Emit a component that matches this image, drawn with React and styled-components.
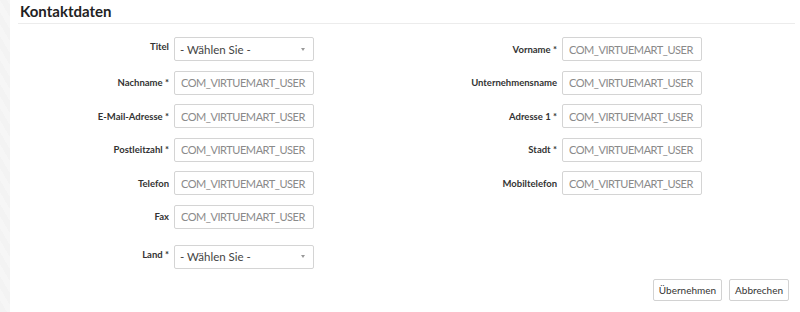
import React from 'react';
import styled, { createGlobalStyle } from 'styled-components';

const GlobalStyle = createGlobalStyle`
    html, body {
        margin: 0;
        padding: 0;
        background: #f4f4f4;
        font-family: Lato, "Liberation Sans", sans-serif;
        color: #333;
    }
`

const Page = styled.div`
    display: flex;
    width: 800px;
    height: 312px;
    overflow: hidden;
`

const SideStrip = styled.div`
    width: 10px;
    flex-shrink: 0;
    background: repeating-linear-gradient(60deg, #f3f3f3 0 6px, #f6f6f6 6px 12px);
`

const Panel = styled.div`
    flex: 1;
    background: #fff;
    display: flex;
    flex-direction: column;
`

const Header = styled.div`
    margin: 0 5px 0 8px;
    height: 24px;
    border-bottom: 1px solid #ececec;
    padding-left: 2px;
    box-sizing: border-box;
`

const Title = styled.h2`
    margin: 0;
    font-size: 15px;
    font-weight: 700;
    line-height: 23px;
    color: #222;
`

const Columns = styled.div`
    display: grid;
    grid-template-columns: 300px 300px;
    column-gap: 88px;
    padding: 13px 0 0 4px;
    align-items: start;
`

const Column = styled.div`
    display: flex;
    flex-direction: column;
    gap: 9.5px;
`

const Field = styled.div`
    display: grid;
    grid-template-columns: 155px 140px;
    column-gap: 5px;
    align-items: ${({ top }) => (top ? 'start' : 'center')};
    margin-top: ${({ extra }) => extra || 0}px;
`

const Label = styled.label`
    text-align: right;
    font-size: 9.5px;
    font-weight: 700;
    color: #333;
    white-space: nowrap;
    padding-top: ${({ top }) => (top ? '4px' : '0')};
`

const Input = styled.input`
    box-sizing: border-box;
    width: 140px;
    height: 24px;
    border: 1px solid #d4d4d4;
    border-radius: 2px;
    padding: 0 6px;
    font-family: Lato, "Liberation Sans", sans-serif;
    font-size: 11px;
    letter-spacing: -0.45px;
    color: #555;
    outline: none;
    &::placeholder {
        color: #8a8a8a;
    }
`

const Select = styled.div`
    box-sizing: border-box;
    width: 140px;
    height: 24px;
    border: 1px solid #d4d4d4;
    border-radius: 2px;
    padding: 0 8px 0 5px;
    display: flex;
    align-items: center;
    justify-content: space-between;
    font-size: 11.5px;
    color: #444;
`

const Caret = styled.span`
    width: 0;
    height: 0;
    border-left: 2.5px solid transparent;
    border-right: 2.5px solid transparent;
    border-top: 3.5px solid #999;
`

const Actions = styled.div`
    display: flex;
    justify-content: flex-end;
    gap: 7px;
    padding: 10px 11px 0 0;
`

const Button = styled.button`
    height: 22px;
    padding: 0 5px;
    background: #fff;
    border: 1px solid #d2d2d2;
    border-radius: 2px;
    font-family: Lato, "Liberation Sans", sans-serif;
    font-size: 10px;
    color: #333;
    cursor: pointer;
`

const ph = 'COM_VIRTUEMART_USER'

const leftFields = [
    { label: 'Nachname *' },
    { label: 'E-Mail-Adresse *' },
    { label: 'Postleitzahl *' },
    { label: 'Telefon' },
    { label: 'Fax' },
]

const rightFields = [
    { label: 'Vorname *' },
    { label: 'Unternehmensname' },
    { label: 'Adresse 1 *' },
    { label: 'Stadt *' },
    { label: 'Mobiltelefon' },
]

const App = () => {
    return (
        <>
            <GlobalStyle />
            <Page>
                <SideStrip />
                <Panel>
                    <Header>
                        <Title>Kontaktdaten</Title>
                    </Header>
                    <Columns>
                        <Column>
                            <Field top>
                                <Label top>Titel</Label>
                                <Select>- Wählen Sie -<Caret /></Select>
                            </Field>
                            {leftFields.map(f => (
                                <Field key={f.label}>
                                    <Label>{f.label}</Label>
                                    <Input placeholder={ph} />
                                </Field>
                            ))}
                            <Field top extra={6.5}>
                                <Label top>Land *</Label>
                                <Select>- Wählen Sie -<Caret /></Select>
                            </Field>
                        </Column>
                        <Column>
                            {rightFields.map(f => (
                                <Field key={f.label}>
                                    <Label>{f.label}</Label>
                                    <Input placeholder={ph} />
                                </Field>
                            ))}
                        </Column>
                    </Columns>
                    <Actions>
                        <Button>Übernehmen</Button>
                        <Button>Abbrechen</Button>
                    </Actions>
                </Panel>
            </Page>
        </>
    )
}

export default App;
